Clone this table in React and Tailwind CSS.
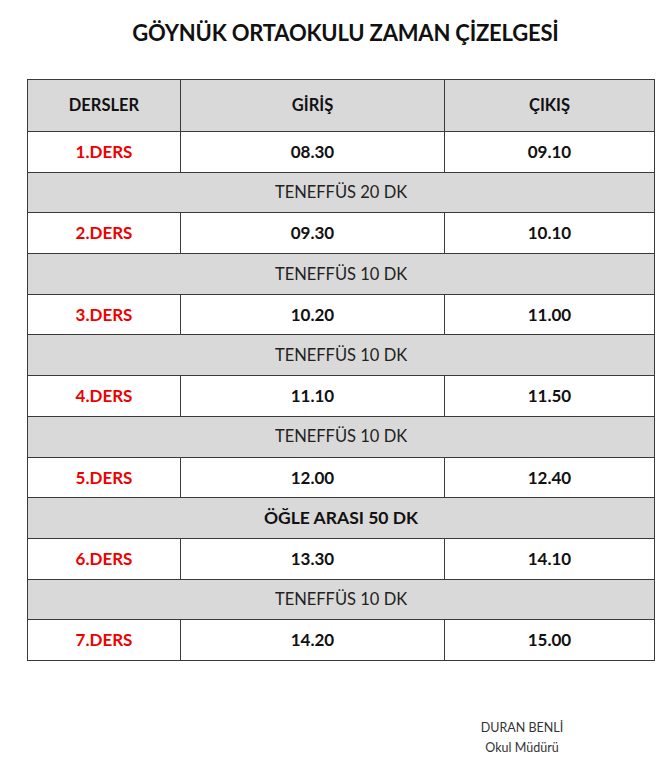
import React from "react";

const rows = [
  { type: "lesson", name: "1.DERS", start: "08.30", end: "09.10" },
  { type: "break", label: "TENEFFÜS 20 DK" },
  { type: "lesson", name: "2.DERS", start: "09.30", end: "10.10" },
  { type: "break", label: "TENEFFÜS 10 DK" },
  { type: "lesson", name: "3.DERS", start: "10.20", end: "11.00" },
  { type: "break", label: "TENEFFÜS 10 DK" },
  { type: "lesson", name: "4.DERS", start: "11.10", end: "11.50" },
  { type: "break", label: "TENEFFÜS 10 DK" },
  { type: "lesson", name: "5.DERS", start: "12.00", end: "12.40" },
  { type: "break", label: "ÖĞLE ARASI 50 DK", bold: true },
  { type: "lesson", name: "6.DERS", start: "13.30", end: "14.10" },
  { type: "break", label: "TENEFFÜS 10 DK" },
  { type: "lesson", name: "7.DERS", start: "14.20", end: "15.00" },
];

const cell = "border border-[#3a3a3a] text-center align-middle p-0";

export default function App() {
  return (
    <div
      className="w-[671px] h-[768px] bg-white text-[#111] relative"
      style={{ fontFamily: "Lato, 'Open Sans', sans-serif" }}
    >
      <h1 className="pt-[19px] pl-[20px] text-center text-[22px] font-bold leading-[28px] tracking-[-0.2px]">
        GÖYNÜK ORTAOKULU ZAMAN ÇİZELGESİ
      </h1>

      <table className="mt-[32px] ml-[27px] w-[627px] border-collapse table-fixed">
        <colgroup>
          <col className="w-[153px]" />
          <col className="w-[264px]" />
          <col className="w-[210px]" />
        </colgroup>
        <thead>
          <tr className="h-[52px] bg-[#d9d9d9] text-[16.5px] font-bold">
            <th className={cell}>DERSLER</th>
            <th className={cell}>GİRİŞ</th>
            <th className={cell}>ÇIKIŞ</th>
          </tr>
        </thead>
        <tbody>
          {rows.map((r, i) =>
            r.type === "lesson" ? (
              <tr key={i} className="h-[40.7px] text-[17px] font-bold">
                <td className={cell + " text-[#ee0000]"}>{r.name}</td>
                <td className={cell}>{r.start}</td>
                <td className={cell}>{r.end}</td>
              </tr>
            ) : (
              <tr key={i} className="h-[40.7px] bg-[#d9d9d9]">
                <td
                  colSpan={3}
                  className={
                    cell +
                    (r.bold ? " text-[17.5px] font-bold" : " text-[16.5px] font-normal text-[#222]")
                  }
                >
                  {r.label}
                </td>
              </tr>
            )
          )}
        </tbody>
      </table>

      <div className="mt-[57px] ml-[462px] w-[120px] text-center text-[12.5px] leading-[20px] text-[#333]">
        <div>DURAN BENLİ</div>
        <div>Okul Müdürü</div>
      </div>
    </div>
  );
}
